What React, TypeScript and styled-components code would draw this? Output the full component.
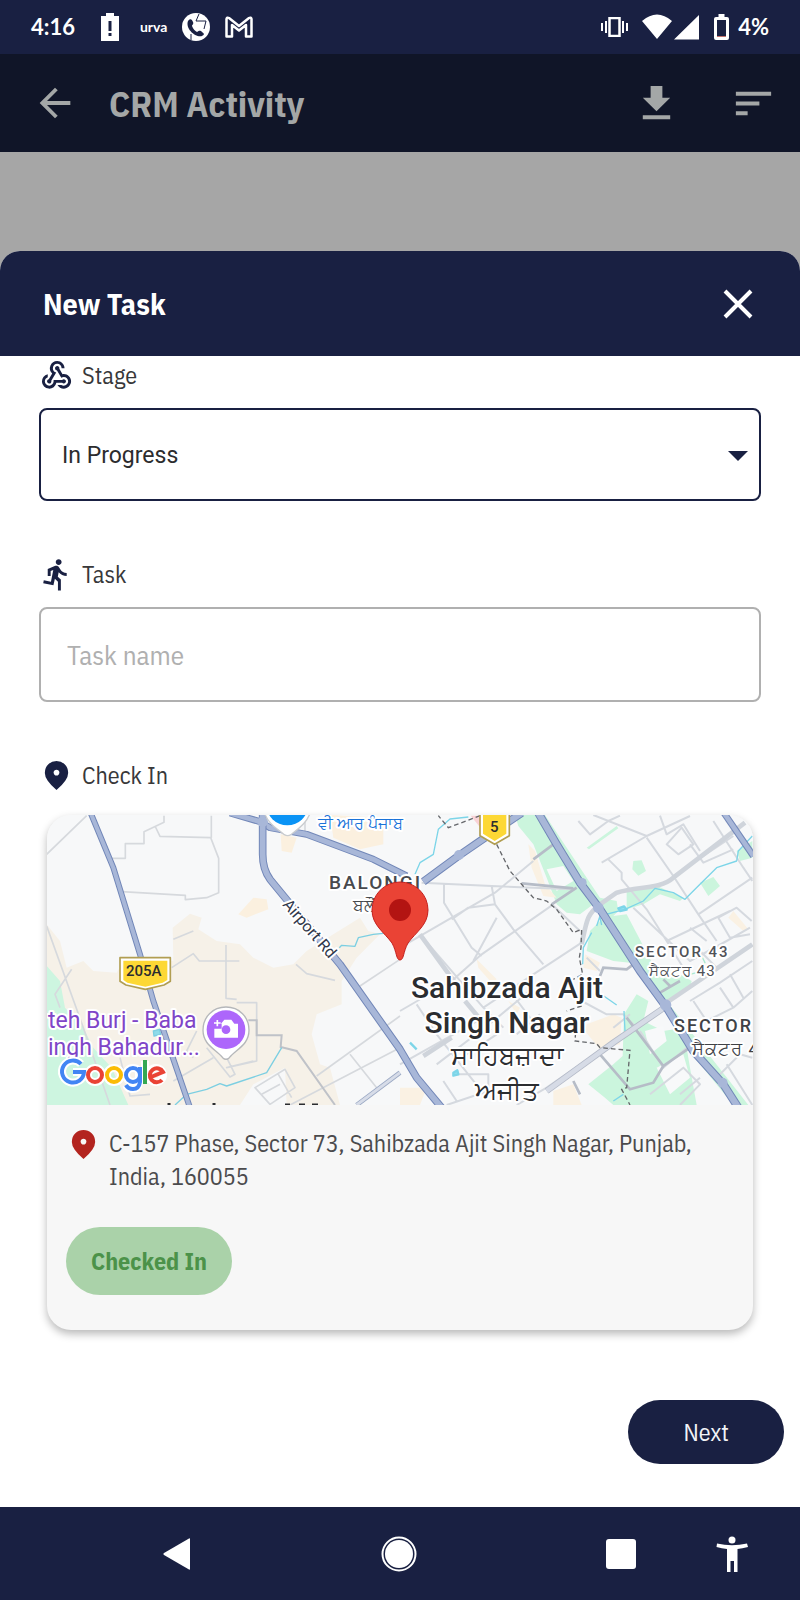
import React from 'react';
import styled, { createGlobalStyle } from 'styled-components';
import { MdArrowBack, MdDirectionsRun, MdDownload, MdSort, MdWebhook } from 'react-icons/md';

const NAVY = '#192042';
const PLEX = "'IBM Plex Sans Condensed', 'Roboto Condensed', Roboto, sans-serif";

const GlobalStyle = createGlobalStyle`
  *, *::before, *::after { box-sizing: border-box; }
  body { margin: 0; background: #fff; font-family: ${PLEX}; }
  button, input, select { font: inherit; }
  p, h1, h2 { margin: 0; }
`;

const Screen = styled.div`
  min-height: 100vh;
  display: flex;
  flex-direction: column;
  background: #a6a6a6;
`;

const StatusBar = styled.div`
  height: 54px;
  padding: 0 31px;
  display: flex;
  align-items: center;
  justify-content: space-between;
  background: ${NAVY};
  color: #fff;
  font: 700 22px/28px Lato, Roboto, sans-serif;
`;

const StatusGroup = styled.div<{ $gap: number }>`
  display: flex;
  align-items: center;
  gap: ${(p) => p.$gap}px;
  svg { display: block; }
`;

const Clock = styled.span`
  margin-right: 11px;
`;

const CarrierName = styled.span`
  margin-left: 6px;
  font: 700 14px/20px Lato, Roboto, sans-serif;
`;

const AppBar = styled.header`
  height: 98px;
  padding: 0 23px 0 32px;
  display: flex;
  align-items: center;
  background: #101528;
  color: #a4a7a7;
`;

const AppTitle = styled.h1`
  flex: 1;
  margin-left: 31px;
  padding-top: 2px;
  font-size: 36px;
  line-height: 48px;
  font-weight: 700;
`;

const IconButton = styled.button`
  display: grid;
  place-items: center;
  padding: 0;
  border: 0;
  background: none;
  color: inherit;
`;

const BarActions = styled.div`
  display: flex;
  gap: 50px;
`;

const Sheet = styled.main`
  flex: 1;
  margin-top: 99px;
  display: flex;
  flex-direction: column;
  background: #fff;
  border-radius: 20px 20px 0 0;
  overflow: hidden;
`;

const SheetHeader = styled.div`
  height: 105px;
  padding: 0 47px 0 43px;
  display: flex;
  align-items: center;
  justify-content: space-between;
  background: ${NAVY};
  color: #fff;
`;

const SheetTitle = styled.h2`
  font-size: 30px;
  line-height: 40px;
  font-weight: 700;
`;

const Form = styled.form`
  flex: 1;
  display: flex;
  flex-direction: column;
  padding: 2px 39px 0;
`;

const Field = styled.section`
  display: flex;
  flex-direction: column;
  gap: 15px;
  margin-bottom: 56px;
`;

const CheckInField = styled(Field)`
  gap: 22px;
  margin-bottom: 70px;
`;

const FieldLabel = styled.label`
  display: flex;
  align-items: center;
  gap: 8px;
  color: #38383a;
  font-size: 24px;
  line-height: 35px;
  font-weight: 400;
  svg { color: ${NAVY}; }
`;

const SelectBox = styled.div`
  position: relative;
  svg {
    position: absolute;
    right: 13px;
    top: 43px;
    pointer-events: none;
  }
`;

const Select = styled.select`
  display: block;
  appearance: none;
  width: 100%;
  height: 93px;
  padding: 2px 21px 0;
  border: 2px solid ${NAVY};
  border-radius: 8px;
  background: #fff;
  color: #2c2c2e;
  font: 400 23px/32px Roboto, sans-serif;
`;

const TextInput = styled.input`
  width: 100%;
  height: 95px;
  padding: 0 26px;
  border: 2px solid #b0b0b0;
  border-radius: 8px;
  background: #fff;
  font-size: 27px;
  font-weight: 400;
  &::placeholder { color: #b0b0b0; opacity: 1; }
`;

const LocationCard = styled.div`
  margin: 0 8px;
  border-radius: 24px;
  background: #f7f7f7;
  box-shadow: 0 4px 8px rgba(0, 0, 0, 0.28);
  overflow: hidden;
`;

const MapCanvas = styled.svg`
  display: block;
  width: 100%;
  height: 290px;
`;

const CardBody = styled.div`
  padding: 22px 19px 35px;
  display: flex;
  flex-direction: column;
  align-items: flex-start;
  gap: 34px;
`;

const Address = styled.p`
  display: flex;
  align-items: flex-start;
  gap: 8px;
  color: #4b4b4d;
  font-size: 24px;
  line-height: 33px;
  font-weight: 400;
  svg { flex: none; color: #b3241f; }
`;

const PillButton = styled.button`
  border: 0;
  border-radius: 34px;
  font-size: 24px;
  line-height: 32px;
`;

const CheckedInButton = styled(PillButton)`
  padding: 18px 25px;
  background: #aad2a9;
  color: #4c9249;
  font-weight: 700;
`;

const FormActions = styled.div`
  display: flex;
  justify-content: flex-end;
  margin-right: -23px;
  padding-bottom: 43px;
`;

const NextButton = styled(PillButton)`
  padding: 16px 55px;
  background: ${NAVY};
  color: #f2f3f7;
  font-weight: 400;
`;

const NavBar = styled.nav`
  height: 93px;
  padding: 0 50px 0 159px;
  display: flex;
  align-items: center;
  gap: 75px;
  background: ${NAVY};
  color: #fff;
`;

const NavMain = styled.div`
  flex: 1;
  display: flex;
  justify-content: space-between;
`;

const MapText = styled.text<{ $size: number; $weight?: number; $fill?: string; $track?: number; $plain?: boolean }>`
  font-family: Roboto, 'Noto Sans', sans-serif;
  font-size: ${(p) => p.$size}px;
  font-weight: ${(p) => p.$weight ?? 400};
  letter-spacing: ${(p) => p.$track ?? 0}px;
  fill: ${(p) => p.$fill ?? '#2b2d30'};
  stroke: ${(p) => (p.$plain ? 'none' : '#fff')};
  stroke-width: 4px;
  stroke-linejoin: round;
  paint-order: stroke;
`;

const PinIcon = () => (
  <svg width="35" height="35" viewBox="0 0 24 24" fill="currentColor" aria-hidden="true">
    <path
      fillRule="evenodd"
      d="M12 12q.825 0 1.413-.588T14 10t-.588-1.413T12 8t-1.413.588T10 10t.588 1.413T12 12m0 10q-4.025-3.425-6.012-6.362T4 10.2q0-3.75 2.413-5.975T12 2t5.588 2.225T20 10.2q0 2.5-1.988 5.438T12 22"
    />
  </svg>
);

const Road = ({ d, w = 18 }: { d: string; w?: number }) => (
  <g fill="none" strokeLinejoin="round">
    <path d={d} stroke="#7287b8" strokeWidth={w} />
    <path d={d} stroke="#a8b7d8" strokeWidth={w - 6} />
  </g>
);

const CityMap = () => (
  <MapCanvas viewBox="0 0 706 290" preserveAspectRatio="xMidYMid slice" role="img" aria-label="Map of Sahibzada Ajit Singh Nagar">
    <rect width="706" height="290" fill="#f7f8f9" />
    <g transform="translate(-7 -14) scale(.33333)">
      {/* western built-up land and parks */}
      <g fill="#f6f1e8">
        <path d="M20 370 60 420 80 500 130 480 160 510 230 515 250 480 330 470 400 480 398 380 450 338 485 350 475 385 530 420 600 430 640 470 700 500 760 490 800 450 880 400 960 350 985 390 1020 400 950 470 905 540 905 610 830 640 815 700 840 790 870 800 900 912 740 912 735 800 640 850 600 912 20 912Z" />
        <path d="M595 340 640 290 680 295 685 325 620 350ZM722 100 770 110 755 155 725 150ZM870 42 1030 50 1030 130 960 145 880 110Z" fill="#fbf0df" />
      </g>
      <path d="M20 495 60 540 75 620 130 680 160 740 215 800 265 912 20 912Z" fill="#cdf5e0" />
      <g fill="none" stroke="#d6d9dd" strokeWidth="5" strokeLinejoin="round">
        <path d="M20 160 140 44M372 44V64L312 92V128H256V172H215M345 75 360 106 512 110 536 172V275L500 290 436 296V283L245 272M514 44V110" />
        <path d="M400 415 460 390M395 500 460 458 478 480 598 480M558 432V592L590 595M590 605H650V780L560 800 640 780M768 490 800 518 885 538M20 375 130 680 210 912M95 505 45 580 60 620M240 770 270 885 330 880M470 690 440 750 460 770M500 740 570 828 585 820 560 770M400 840 520 770M645 860 735 805 765 860 690 910ZM665 880 720 850M715 820 755 890M930 760 1010 860M830 825 1080 645M960 555 1080 475M795 50V95M1080 740 750 912" />
      </g>
      <path d="M625 658H650V703H725L722 738 770 750 885 912" fill="none" stroke="#bfc2c8" strokeWidth="6" />
      <g fill="none" stroke="#7ccfe2" strokeWidth="4" strokeLinejoin="round">
        <path d="M405 912 440 880 500 865 540 848 560 855 680 815 725 740M898 440 905 433 945 436 955 410 1000 400 1030 397" />
        <path d="M340 690 358 685 362 700 342 705Z" fill="#8fdbe9" />
      </g>
      <path d="M950 912 1080 815" stroke="#9ba9c4" strokeWidth="14" fill="none" />
      <path d="M950 912 1080 815" stroke="#d7dce8" strokeWidth="9" fill="none" />

      {/* eastern sectors */}
      <g transform="translate(1080 0)">
        <g fill="#cbf5dd">
          <path d="M345 42H435L600 290 650 300 655 330 640 345 680 340 780 530 840 520 875 540 870 560 800 600 1045 912H1000L860 740 790 590 750 560 690 485 640 480 560 450 570 390 610 350 580 310 540 340 500 335 470 310 440 230 400 130 355 75Z" />
          <path d="M680 270 760 250 850 290 840 300 780 280 730 310 680 325ZM700 180 725 178 738 210 715 224 697 205ZM900 245 940 228 960 255 925 285ZM565 850 640 790 668 765 672 640 710 580 745 600 730 660 790 690 850 680 870 800 890 912H640L615 890ZM1010 150 1057 120V170L1020 180ZM560 140 650 75 655 82 567 145Z" />
        </g>
        <path d="M440 205 490 195 520 240 470 270ZM770 800 850 760 870 830 810 880ZM735 690 790 675 800 720 750 760Z" fill="#f8f9fa" />
        <path d="M385 130 405 150 435 250 470 290 430 285 395 200ZM230 475 290 535 275 545 235 500ZM560 670 640 640 665 650 660 730 600 745 555 690ZM1000 330 1045 385 1030 390 985 350ZM460 870 520 850 545 912H460ZM555 460 600 485 590 510 550 500ZM0 860 80 860 60 912H0ZM325 600 360 620 350 640Z" fill="#faf1e3" />
        <path d="M212 44H240L245 85Z" fill="#f9d2d6" />
        <g fill="none" stroke="#d5d9df" strokeWidth="6" strokeLinejoin="round">
          <path d="M65 245 275 255 515 265M132 250V305L215 440 245 465M275 255 285 310 205 320 155 355M285 310 340 385 430 490M0 440 285 275 400 180M60 400 250 620 310 680M0 630 155 540 245 460 460 310M250 620 400 520 545 425M0 790 250 650M290 350 220 480M455 310 540 390M50 610 110 700 260 890M110 790 280 660 400 560M160 820H265V870L140 912M130 840 170 900M200 760 290 700M350 700 420 640M330 570 420 690" />
          <path d="M535 60 570 100 625 60 660 44M580 42 740 105 870 45M740 105 605 185M740 110 820 225 1000 105M820 225 895 340 950 420M895 340 1057 230M870 130 910 185 1000 145M780 44 800 100 850 70 900 150M800 130 845 80 880 130 835 160ZM625 175 665 215V235L740 325 800 420 990 330M800 420 850 500M700 320 870 480 980 420 1050 380M955 350 1010 320 1055 360M955 350 990 410 1050 400M940 60 1030 200 1057 240M870 600 960 545 1057 480M880 600 920 660 1000 620 960 560M1000 620 1057 570M990 520 1030 590M870 380 920 420M880 430 950 500" />
          <path d="M545 600 620 640H670L710 680M720 690 790 800 860 740M560 470 600 510M600 750 440 860 350 912M750 880 850 800 900 850 840 912M640 680 690 640" />
          <path d="M840 880 900 830M960 820 1020 760 1057 770M980 790 1057 912" />
        </g>
        <g fill="none" stroke="#cfd4db" strokeWidth="14" strokeLinejoin="round">
          <path d="M545 430C560 360 560 340 600 310L650 275C720 255 780 265 820 230L1035 65M60 400 165 545M800 605 1057 430" />
          <path d="M195 600 270 690M70 765 155 710" />
        </g>
        <path d="M600 525 610 500 680 505 700 490M600 760 690 865 760 845 790 795 870 740M680 650 790 795M400 175 460 130M455 310 530 260M365 247 520 262M780 575 840 540M790 535 810 555M520 840 540 880" fill="none" stroke="#b6bcc7" strokeWidth="8" />
        <path d="M800 615 640 725 440 870" fill="none" stroke="#b4bac8" strokeWidth="19" />
        <path d="M800 615 640 725 440 870" fill="none" stroke="#d6dbe6" strokeWidth="14" />
        <g fill="none" stroke="#7dd5e8" strokeWidth="4" strokeLinejoin="round">
          <path d="M205 48 150 54 115 85 100 160 60 185 45 220M1057 105 1015 150 1010 180 950 200 900 250 855 295 820 275 765 262 730 300 675 325 600 345 590 375M575 395 550 440 548 490M600 350 605 372M590 570 650 612M672 630 675 690M640 900 670 880" />
          <path d="M905 465 915 485 890 515 870 520" stroke="#abe9d1" />
          <path d="M655 322 672 316 680 326 660 330ZM30 725 50 745M160 815 172 808 175 820 160 824Z" fill="#8fdff0" strokeWidth="7" />
        </g>
        <path d="M240 44 145 80 115 44M290 130 330 210 400 290 440 300 470 325 520 395 545 385 543 440 538 470 548 520 520 535M545 615 500 630M530 650 525 720 590 728 600 740 690 748 680 860 665 865 690 912" fill="none" stroke="#65676b" strokeWidth="4" strokeDasharray="14 9" />
      </g>

      {/* arterial roads */}
      <Road d="M152 36 220 200 300 460 340 600 450 920" />
      <Road d="M570 36 660 62 690 80 800 100 1000 175 1100 225" w={21} />
      <Road d="M668 36V160Q668 205 690 235L735 290 900 490 1080 745 1130 830 1205 920" w={23} />
      <Road d="M1150 242 1255 165 1335 110 1445 36" w={24} />
      <Road d="M1495 36 1550 130 1620 245 1680 325 1800 510 1880 620 1960 750 2050 850 2095 920" w={25} />
      <Road d="M2052 36 2140 165" w={20} />
      <g fill="#a8b7d8">
        <circle cx="1675" cy="320" r="16" />
        <circle cx="1877" cy="612" r="17" />
        <circle cx="1257" cy="162" r="15" />
        <circle cx="1626" cy="245" r="14" />
        <circle cx="2048" cy="845" r="15" />
        <circle cx="668" cy="62" r="16" />
      </g>

      {/* highway shields */}
      <g strokeLinejoin="round">
        <path d="M240 470H391V541L372 552 316 565 258 552 240 541Z" fill="#fff" stroke="#b19e53" strokeWidth="5" />
        <path d="M250 479H382V537L368 545 316 557 262 545 250 537Z" fill="#fdd835" />
        <path d="M1320 30H1408V104L1364 130 1320 104Z" fill="#fff" stroke="#b19e53" strokeWidth="5" />
        <path d="M1329 30H1399V98L1364 120 1329 98Z" fill="#fdd835" />
      </g>

      {/* place pins */}
      <path d="M672 30C680 65 710 82 733 101Q743 107 753 101C776 82 803 65 812 30Z" fill="#fff" stroke="#c9cccf" strokeWidth="4" />
      <circle cx="742" cy="10" r="63" fill="#0a93f5" />
      <path d="M558 618C518 618 489 648 489 688 489 732 528 745 548 770Q558 780 568 770C588 745 627 732 627 688 627 648 598 618 558 618Z" fill="#fff" stroke="#b5b7ba" strokeWidth="4" />
      <circle cx="558" cy="686" r="58" fill="#ad66fb" />
      <path d="M543 668 553 656H574L583 668H594V710H523V683H545V668Z" fill="#fff" />
      <path d="M532 657V676M522 666H542" stroke="#fff" strokeWidth="5" />
      <circle cx="558" cy="686" r="13" fill="#ad66fb" />
    </g>

    <MapText x="271" y="14" $size={16} $weight={500} $fill="#1a73d9">ਵੀ ਆਰ ਪੰਜਾਬ</MapText>
    <MapText x="282" y="74" $size={19} $weight={500} $track={2} $fill="#47494d">BALONGI</MapText>
    <MapText x="306" y="96" $size={17} $fill="#47494d">ਬਲੌਂਗੀ</MapText>
    <MapText x="79" y="161" $size={15} $weight={500} $plain>205A</MapText>
    <MapText x="443" y="17" $size={15} $weight={500} $plain>5</MapText>
    <MapText transform="translate(235 90) rotate(49)" $size={16} $fill="#30374a">Airport Rd</MapText>
    <MapText x="1" y="213" $size={23} $fill="#7f45c8">teh Burj - Baba</MapText>
    <MapText x="1" y="240" $size={23} $fill="#7f45c8">ingh Bahadur...</MapText>
    <MapText x="460" y="183" $size={30} $weight={500} textAnchor="middle">Sahibzada Ajit</MapText>
    <MapText x="460" y="218" $size={30} $weight={500} textAnchor="middle">Singh Nagar</MapText>
    <MapText x="460" y="250" $size={26} textAnchor="middle">ਸਾਹਿਬਜ਼ਾਦਾ</MapText>
    <MapText x="460" y="285" $size={26} textAnchor="middle">ਅਜੀਤ</MapText>
    <MapText x="588" y="142" $size={15} $weight={500} $track={2} $fill="#505257">SECTOR 43</MapText>
    <MapText x="602" y="161" $size={15} $track={1} $fill="#505257">ਸੈਕਟਰ 43</MapText>
    <MapText x="627" y="217" $size={18} $weight={500} $track={2} $fill="#404246">SECTOR</MapText>
    <MapText x="645" y="240" $size={18} $track={1} $fill="#404246">ਸੈਕਟਰ 4</MapText>

    {/* tops of labels that continue below the visible area */}
    <path d="M122 288V290M167 288V290M238 290H243M252 290H258M265 290H271" stroke="#2b2d30" strokeWidth="3" />

    {/* map provider logo */}
    <g fill="none" strokeWidth="4">
      <g stroke="#fff" strokeWidth="8">
        <circle cx="48" cy="260" r="7" />
        <circle cx="67" cy="260" r="7" />
        <circle cx="86" cy="260" r="7" />
        <circle cx="109" cy="260" r="7" />
        <path d="M34 249A11 11 0 1 0 37 257H26M98 246V268M92 253V268Q91 274 85 274 81 274 79 270" />
      </g>
      <path d="M34 249A11 11 0 1 0 37 257H26" stroke="#4285f4" />
      <circle cx="48" cy="260" r="7" stroke="#ea4335" />
      <circle cx="67" cy="260" r="7" stroke="#fbbc05" />
      <path d="M93 252V267Q92 274 86 274 81 274 79 270" stroke="#4285f4" />
      <circle cx="86" cy="260" r="7" stroke="#4285f4" />
      <path d="M98 245V269" stroke="#34a853" />
      <path d="M104 262 116 257A7 7 0 1 0 115 265" stroke="#ea4335" strokeWidth="4" />
    </g>

    {/* selected location */}
    <path d="M353 145C349 145 350 137 345 128 337 117 325 110 325 95A28 28 0 0 1 381 95C381 110 369 117 361 128 356 137 357 145 353 145Z" fill="#ea4335" stroke="#c5221f" strokeWidth="1" />
    <circle cx="353" cy="95" r="11" fill="#b31412" />
  </MapCanvas>
);

export default function App() {
  return (
    <Screen>
      <GlobalStyle />
      <StatusBar>
        <StatusGroup $gap={15}>
          <Clock>4:16</Clock>
          <svg width="18" height="28" viewBox="0 0 18 28" aria-label="Battery low">
            <path fillRule="evenodd" fill="#fff" d="M5 0H13V3H18V28H0V3H5ZM7.500 8V18H10.500V8ZM7.500 20V23H10.500V20Z" />
          </svg>
          <CarrierName>urva</CarrierName>
          <svg width="28" height="28" viewBox="0 0 28 28" aria-label="Call">
            <circle cx="14" cy="14" r="14" fill="#fff" />
            <path d="M6 8C8 5 10 6 11 9 12 11 10 12 10 13 11 16 13 18 15 19 17 18 18 17 20 19 23 21 22 22 20 23 14 25 3 16 6 8Z" fill={NAVY} />
            <path d="M17 1 14 8H24M24 8 22 16M9 21V27" fill="none" stroke={NAVY} strokeWidth="1" />
          </svg>
          <svg width="28" height="22" viewBox="0 0 28 22" aria-label="Mail">
            <path d="M1.500 20.500V3Q2 1 4 2L14 10 24 2Q26 1 26.500 3V20.500H21V9L14 14.500 7 9V20.500Z" fill="none" stroke="#fff" strokeWidth="2.500" strokeLinejoin="round" />
          </svg>
        </StatusGroup>
        <StatusGroup $gap={14}>
          <svg width="27" height="20" viewBox="0 0 27 20" aria-label="Vibrate" fill="none" stroke="#fff">
            <rect x="8.500" y="1" width="10" height="18" strokeWidth="2.500" />
            <path d="M1 6V14M26 6V14M5 4V16M22 4V16" strokeWidth="2" />
          </svg>
          <svg width="58" height="26" viewBox="0 0 58 26" aria-label="Signal" fill="#fff">
            <path d="M0 7Q15-6 30 7L15 25ZM57 1V25.500H32Z" />
          </svg>
          <StatusGroup $gap={9}>
            <svg width="15" height="26" viewBox="0 0 15 26" aria-label="Battery">
              <path fillRule="evenodd" fill="#fff" d="M4.500 0H10.500V3H13Q15 3 15 5V24Q15 26 13 26H2Q0 26 0 24V5Q0 3 2 3H4.500ZM3 6V23H12V6Z" />
              <path d="M3 22.500H12" stroke="#c4736f" />
            </svg>
            <span>4%</span>
          </StatusGroup>
        </StatusGroup>
      </StatusBar>

      <AppBar>
        <IconButton type="button" aria-label="Back"><MdArrowBack size={46} /></IconButton>
        <AppTitle>CRM Activity</AppTitle>
        <BarActions>
          <IconButton type="button" aria-label="Download"><MdDownload size={47} /></IconButton>
          <IconButton type="button" aria-label="Sort"><MdSort size={47} /></IconButton>
        </BarActions>
      </AppBar>

      <Sheet>
        <SheetHeader>
          <SheetTitle>New Task</SheetTitle>
          <IconButton type="button" aria-label="Close">
            <svg width="30" height="30" viewBox="0 0 30 30">
              <path d="M2 2 28 28M28 2 2 28" stroke="#fff" strokeWidth="4" />
            </svg>
          </IconButton>
        </SheetHeader>

        <Form onSubmit={(e) => e.preventDefault()}>
          <Field>
            <FieldLabel htmlFor="stage"><MdWebhook size={35} />Stage</FieldLabel>
            <SelectBox>
              <Select id="stage" defaultValue="In Progress">
                <option>In Progress</option>
              </Select>
              <svg width="20" height="10" viewBox="0 0 20 10"><path d="M0 0H20L10 10Z" fill={NAVY} /></svg>
            </SelectBox>
          </Field>
          <Field>
            <FieldLabel htmlFor="task"><MdDirectionsRun size={35} />Task</FieldLabel>
            <TextInput id="task" type="text" placeholder="Task name" />
          </Field>
          <CheckInField>
            <FieldLabel as="p"><PinIcon />Check In</FieldLabel>
            <LocationCard>
              <CityMap />
              <CardBody>
                <Address>
                  <PinIcon />
                  <span>C-157 Phase, Sector 73, Sahibzada Ajit Singh Nagar, Punjab, India, 160055</span>
                </Address>
                <CheckedInButton type="button">Checked In</CheckedInButton>
              </CardBody>
            </LocationCard>
          </CheckInField>
          <FormActions>
            <NextButton type="submit">Next</NextButton>
          </FormActions>
        </Form>
      </Sheet>

      <NavBar>
        <NavMain>
          <IconButton type="button" aria-label="Back">
            <svg width="36" height="36" viewBox="0 0 36 36"><path d="M31 3V33Q31 34 30 33.500L5 19Q3.500 18 5 17L30 2.500Q31 2 31 3Z" fill="#fff" /></svg>
          </IconButton>
          <IconButton type="button" aria-label="Home">
            <svg width="36" height="36" viewBox="0 0 36 36">
              <circle cx="18" cy="18" r="16.500" fill="none" stroke="#fff" strokeWidth="2" />
              <circle cx="18" cy="18" r="14" fill="#fff" />
            </svg>
          </IconButton>
          <IconButton type="button" aria-label="Recent apps">
            <svg width="36" height="36" viewBox="0 0 36 36"><rect x="3" y="3" width="30" height="30" rx="3" fill="#fff" /></svg>
          </IconButton>
        </NavMain>
        <IconButton type="button" aria-label="Accessibility">
          <svg width="36" height="36" viewBox="0 0 36 36" fill="#fff">
            <circle cx="18" cy="4" r="3.500" />
            <path d="M3 7.500Q18 11 33 7.500L34 11Q28 12.500 23.500 13V36H20V25H16.500V36H13V13Q8 12.500 2.500 11Z" />
          </svg>
        </IconButton>
      </NavBar>
    </Screen>
  );
}
